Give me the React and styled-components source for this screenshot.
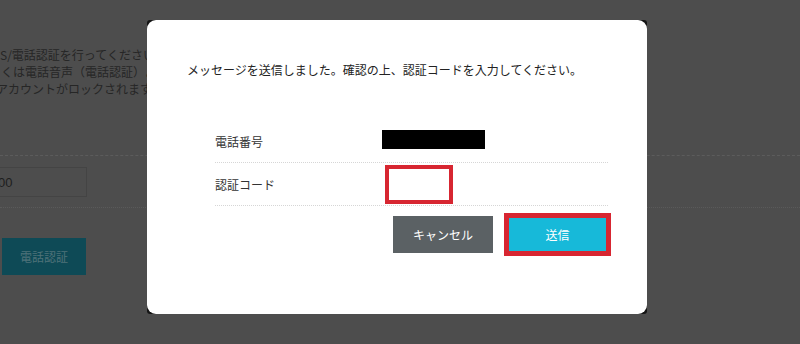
import React from "react";
import styled, { createGlobalStyle } from "styled-components";

const Global = createGlobalStyle`
  html, body { margin: 0; padding: 0; }
  body {
    background: #4d4d4d;
    font-family: "Noto Sans CJK JP", "Liberation Sans", sans-serif;
  }
`;

const Page = styled.div`
  position: relative;
  width: 800px;
  height: 344px;
  overflow: hidden;
  background: #4d4d4d;
`;

const BgContent = styled.div`
  padding-top: 46px;
`;

const Notice = styled.div`
  width: 147px;
  overflow: hidden;
  font-size: 12px;
  line-height: 17px;
  color: #262626;
  white-space: nowrap;
`;

const NoticeLine = styled.div`
  margin-left: ${(p) => p.$shift}px;
`;

const FormBlock = styled.div`
  margin-top: 58px;
  border-top: 1px dashed #5c5c5c;
  border-bottom: 1px dotted #5a5a5a;
  padding: 11px 0 10px;
`;

const BgInput = styled.div`
  width: 120px;
  height: 30px;
  margin-left: -33px;
  box-sizing: border-box;
  border: 1px solid #444;
  display: flex;
  align-items: center;
  padding-left: 30px;
  font-family: "Liberation Sans", sans-serif;
  font-size: 13px;
  color: #1e1e1e;
`;

const BgButton = styled.div`
  margin: 30px 0 0 2px;
  width: 84px;
  height: 37px;
  background: #0e4a56;
  color: #4f7279;
  font-size: 12px;
  display: flex;
  align-items: center;
  justify-content: center;
`;

const Overlay = styled.div`
  position: absolute;
  inset: 0;
  padding: 20px 0 0 147px;
`;

const ModalFrame = styled.div`
  width: 500px;
  height: 294px;
  background: #151515;
  border-radius: 3px;
`;

const Modal = styled.div`
  height: 100%;
  box-sizing: border-box;
  background: #fff;
  border-radius: 9px;
  padding: 41px 36px 0 40px;
  color: #333;
`;

const Message = styled.p`
  margin: 0;
  font-size: 12px;
  line-height: 18px;
  color: #222;
`;

const Table = styled.div`
  margin: 41px 3px 0 28px;
`;

const Row = styled.div`
  display: flex;
  align-items: center;
  height: 42px;
  border-bottom: 1px dotted #d6d6d6;
`;

const Label = styled.div`
  width: 167px;
  font-size: 12px;
  color: #333;
`;

const Masked = styled.div`
  width: 103px;
  height: 19px;
  background: #000;
  margin-top: -3px;
`;

const CodeBox = styled.div`
  margin-left: 3px;
  width: 60px;
  height: 31px;
  border: 4px solid #d72631;
`;

const Actions = styled.div`
  display: flex;
  justify-content: flex-end;
  align-items: center;
  gap: 11px;
  margin-top: 7px;
`;

const Button = styled.div`
  width: ${(p) => p.$w}px;
  height: ${(p) => p.$h}px;
  background: ${(p) => p.$bg};
  color: #fff;
  font-size: 12px;
  display: flex;
  align-items: center;
  justify-content: center;
`;

const Highlight = styled.div`
  border: 5px solid #d72631;
`;

export default function App() {
  return (
    <>
      <Global />
      <Page>
        <BgContent>
          <Notice>
            <NoticeLine $shift={0}>S/電話認証を行ってください。</NoticeLine>
            <NoticeLine $shift={1}>くは電話音声（電話認証）よりご確認ください。</NoticeLine>
            <NoticeLine $shift={-4}>アカウントがロックされます。</NoticeLine>
          </Notice>
          <FormBlock>
            <BgInput>00</BgInput>
          </FormBlock>
          <BgButton>電話認証</BgButton>
        </BgContent>
        <Overlay>
          <ModalFrame>
            <Modal>
              <Message>
                メッセージを送信しました。確認の上、認証コードを入力してください。
              </Message>
              <Table>
                <Row>
                  <Label>電話番号</Label>
                  <Masked />
                </Row>
                <Row>
                  <Label>認証コード</Label>
                  <CodeBox />
                </Row>
              </Table>
              <Actions>
                <Button $w={100} $h={37} $bg="#5b6164">キャンセル</Button>
                <Highlight>
                  <Button $w={97} $h={33} $bg="#17b9d9">送信</Button>
                </Highlight>
              </Actions>
            </Modal>
          </ModalFrame>
        </Overlay>
      </Page>
    </>
  );
}
